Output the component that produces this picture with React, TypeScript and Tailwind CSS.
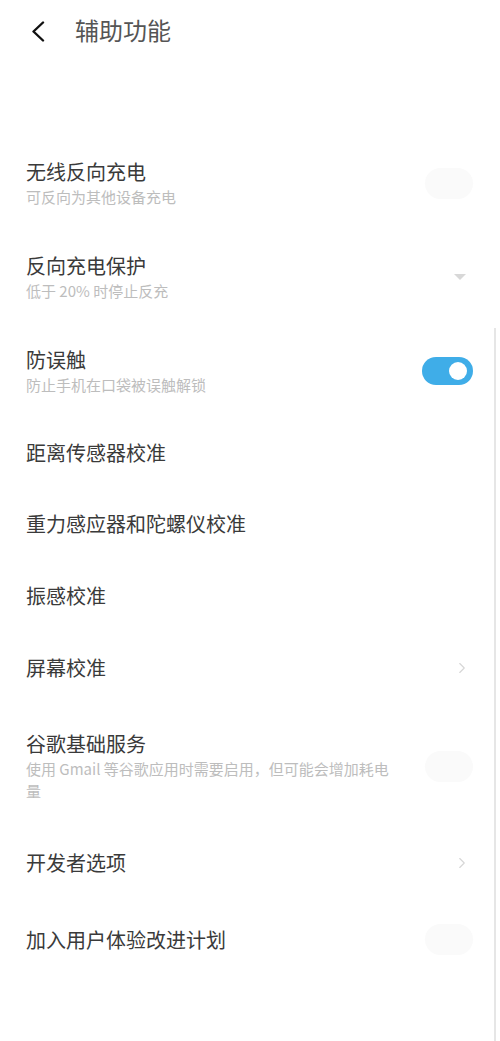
import { ChevronRight } from "lucide-react";

type Control = "faint" | "on" | "chevron" | "dropdown" | "none";

const rows: { title: string; sub?: string; control: Control; pad: string }[] = [
    { title: "无线反向充电", sub: "可反向为其他设备充电", control: "faint", pad: "pt-[21px]" },
    { title: "反向充电保护", sub: "低于 20% 时停止反充", control: "dropdown", pad: "pt-[44px]" },
    { title: "防误触", sub: "防止手机在口袋被误触解锁", control: "on", pad: "pt-[44px]" },
    { title: "距离传感器校准", control: "none", pad: "pt-[43px]" },
    { title: "重力感应器和陀螺仪校准", control: "none", pad: "pt-[43px]" },
    { title: "振感校准", control: "none", pad: "pt-[44px]" },
    { title: "屏幕校准", control: "chevron", pad: "pt-[44px]" },
    { title: "谷歌基础服务", sub: "使用 Gmail 等谷歌应用时需要启用，但可能会增加耗电量", control: "faint", pad: "pt-[48px]" },
    { title: "开发者选项", control: "chevron", pad: "pt-[47px]" },
    { title: "加入用户体验改进计划", control: "faint", pad: "pt-[47px]" },
];

function RowControl({ control }: { control: Control }) {
    if (control === "faint") {
        return <div className="w-[48px] h-[31px] rounded-full bg-[#fafafa]" />;
    }
    if (control === "on") {
        return (
            <div className="w-[51px] h-[28px] rounded-full bg-[#3fade8] flex items-center justify-end pr-[6px]">
                <div className="w-[18px] h-[18px] rounded-full bg-white" />
            </div>
        );
    }
    if (control === "chevron") {
        return <ChevronRight className="w-[18px] h-[18px] mr-[2px] text-[#d6d6d6]" strokeWidth={1.5} />;
    }
    if (control === "dropdown") {
        return (
            <svg width="12" height="7" viewBox="0 0 12 7" className="mr-[7px]">
                <polygon points="0,0 12,0 6,6" fill="#d8d8d8" />
            </svg>
        );
    }
    return null;
}

export default function App() {
    return (
        <div
            className="relative w-[500px] h-[1041px] bg-white overflow-hidden"
            style={{ fontFamily: '"Noto Sans CJK SC", "Noto Sans", sans-serif' }}
        >
            {/* header */}
            <div className="h-[60px] flex items-center pl-[31px]">
                <svg width="14" height="21" viewBox="0 0 14 21" className="mt-[3px]">
                    <polyline points="12,1.5 2.5,10.5 12,19.5" fill="none" stroke="#111" strokeWidth="2.4" strokeLinecap="round" strokeLinejoin="round" />
                </svg>
                <h1 className="ml-[30px] text-[24px] leading-[30px] text-[#555]">辅助功能</h1>
            </div>

            {/* list */}
            <div className="mt-[77px] flex flex-col">
                {rows.map((row) => (
                    <div key={row.title} className={`${row.pad} pl-[26px] pr-[27px] flex items-center justify-between`}>
                        <div className="max-w-[372px]">
                            <p className="text-[20px] leading-[28px] text-[#3a3a3a]">{row.title}</p>
                            {row.sub && <p className="text-[15px] leading-[22px] text-[#bdbdbd]">{row.sub}</p>}
                        </div>
                        <RowControl control={row.control} />
                    </div>
                ))}
            </div>

            {/* scrollbar */}
            <div className="absolute right-[4px] top-[328px] bottom-0 w-[2px] bg-[#e6e6e6]" />
        </div>
    );
}
